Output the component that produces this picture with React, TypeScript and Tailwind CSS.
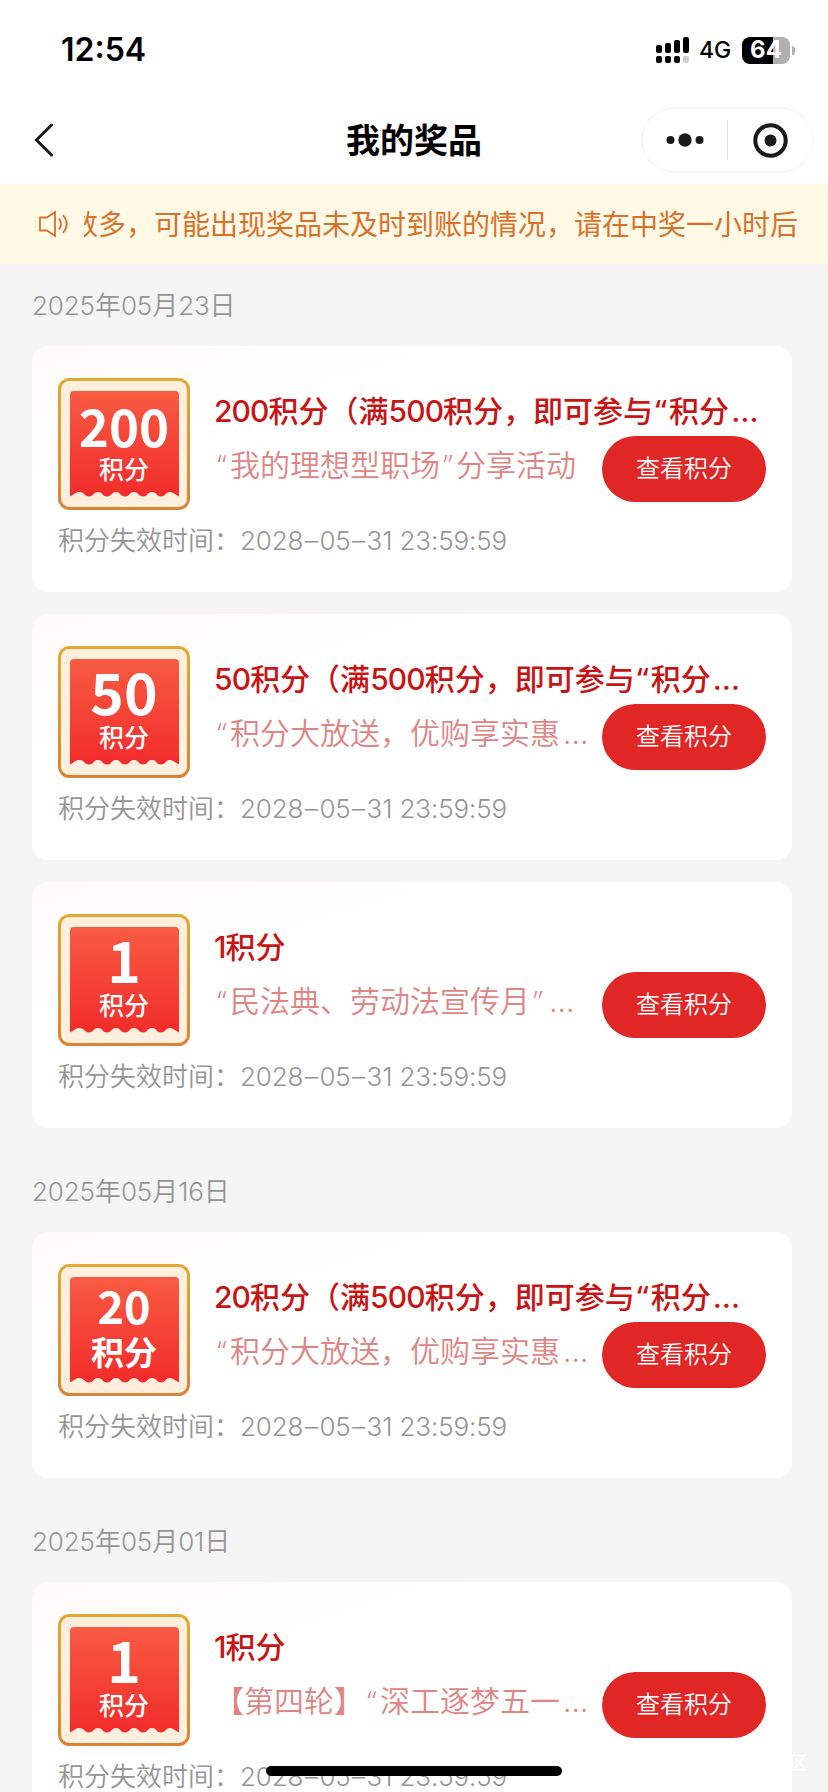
interface Prize {
  points: string;
  title: string;
  activity: string;
  large?: boolean;
}

interface PrizeGroup {
  date: string;
  prizes: Prize[];
}

const EXPIRE_TIME = '2028–05–31 23:59:59';

const groups: PrizeGroup[] = [
  {
    date: '2025年05月23日',
    prizes: [
      { points: '200', title: '200积分（满500积分，即可参与“积分…', activity: '“我的理想型职场”分享活动' },
      { points: '50', title: '50积分（满500积分，即可参与“积分…', activity: '“积分大放送，优购享实惠…' },
      { points: '1', title: '1积分', activity: '“民法典、劳动法宣传月”…' },
    ],
  },
  {
    date: '2025年05月16日',
    prizes: [
      { points: '20', title: '20积分（满500积分，即可参与“积分…', activity: '“积分大放送，优购享实惠…', large: true },
    ],
  },
  {
    date: '2025年05月01日',
    prizes: [{ points: '1', title: '1积分', activity: '【第四轮】“深工逐梦五一…' }],
  },
];

function runClass(part: string, tight?: boolean) {
  if (part === '“' || part === '”') return "inline-block w-[16px] text-center font-['Noto_Sans']";
  if (part === '…') return "inline-block w-[32px] text-center font-['Inter'] tracking-[0.02em]";
  if (part === '–') return "inline-block w-[16px] text-center font-['Inter']";
  return tight ? "font-['Inter'] tracking-[-0.03em]" : "font-['Inter'] tracking-[-0.005em]";
}

// Latin runs use their own face and tracking so the digits stay compact next to the hanzi
function MixedText({ text, tight }: { text: string; tight?: boolean }) {
  return (
    <>
      {text.split(/([0-9: ]+|[“”…–])/).map((part, i) =>
        i % 2 === 1 ? (
          <span key={i} className={runClass(part, tight)}>
            {part}
          </span>
        ) : (
          part
        )
      )}
    </>
  );
}

function StatusBar() {
  return (
    <div className="flex h-[96px] items-center justify-between pl-[61px] pr-[33px] pt-1">
      <span className="font-['Inter'] text-[32px] font-semibold leading-none">12:54</span>
      <div className="flex items-center">
        <svg width="34" height="27" viewBox="0 0 34 27">
          <rect x="0" y="8" width="6" height="8" rx="2" />
          <rect x="9" y="6" width="6" height="10" rx="2" />
          <rect x="18" y="3" width="6" height="13" rx="2" />
          <rect x="27" y="0" width="6" height="16" rx="2" />
          <rect x="0" y="19" width="6" height="7" rx="2" />
          <rect x="9" y="19" width="6" height="7" rx="2" />
          <rect x="18" y="19" width="6" height="7" rx="2" />
          <rect x="27" y="19" width="6" height="7" rx="2" fill="#d0d0d0" />
        </svg>
        <span className="ml-[9px] w-[34px] font-['Inter'] text-[23px] font-medium leading-none">4G</span>
        <div className="ml-[9px] flex h-[27px] w-[48px] items-center justify-center rounded-[8px] bg-linear-to-r from-black from-65% to-[#b0b0b0] to-65% font-['Inter'] text-[24px] font-bold leading-none text-white">
          64
        </div>
        <div className="ml-[2px] h-[9px] w-[3px] rounded-r-full bg-[#b0b0b0]" />
      </div>
    </div>
  );
}

function NavBar() {
  return (
    <div className="grid h-[88px] grid-cols-[1fr_auto_1fr] items-center pl-[34px] pr-[14px]">
      <svg width="20" height="34" viewBox="0 0 20 34" fill="none" stroke="#1a1a1a" strokeWidth="3" strokeLinecap="round">
        <path d="M17.500 2 L2.500 17 L17.500 32" />
      </svg>
      <h1 className="mb-[3px] ml-[-20px] text-[34px] font-bold leading-none">我的奖品</h1>
      <div className="flex h-[66px] w-[173px] items-center justify-self-end rounded-full border-2 border-[#f9f9f9]">
        <svg className="ml-[23px]" width="38" height="14" viewBox="0 0 38 14" fill="#1a1a1a">
          <circle cx="4.500" cy="7" r="4" />
          <circle cx="19" cy="7" r="6.700" />
          <circle cx="33.500" cy="7" r="4" />
        </svg>
        <div className="ml-[23px] h-[40px] w-px bg-[#e2e2e2]" />
        <svg className="ml-[25px]" width="35" height="35" viewBox="0 0 35 35" fill="none">
          <circle cx="17.500" cy="17.500" r="15.200" stroke="#1a1a1a" strokeWidth="4" />
          <circle cx="17.500" cy="17.500" r="6" fill="#1a1a1a" />
        </svg>
      </div>
    </div>
  );
}

function NoticeBar() {
  return (
    <div className="flex h-[80px] items-center bg-[#fff9e6] pl-[39px] pr-[30px] text-[#d9712a]">
      <svg width="30" height="28" viewBox="0 0 30 28" fill="none" stroke="currentColor" strokeWidth="1.800">
        <path d="M1 7.500 H8 L16 2 V26 L8 20.500 H1 Z" />
        <path d="M20 8.500 Q24 14 20 19.500" />
        <path d="M24 5 Q31.500 14 24 23" />
      </svg>
      <div className="mb-[2px] ml-[15px] flex flex-1 justify-end overflow-hidden">
        <span className="shrink-0 whitespace-nowrap text-[28px] leading-[40px]">
          数多，可能出现奖品未及时到账的情况，请在中奖一小时后
        </span>
      </div>
    </div>
  );
}

function pointsClass(points: string, large?: boolean) {
  if (large) return 'text-[45px] font-bold';
  return points.length > 2 ? 'text-[51px] font-bold' : 'text-[57px] font-bold';
}

function PointsBadge({ points, large }: { points: string; large?: boolean }) {
  return (
    <svg className="shrink-0" width="132" height="132" viewBox="0 0 132 132">
      <defs>
        <linearGradient id="badgeBorder" x1="0" y1="0" x2="0" y2="1">
          <stop offset="0" stopColor="#e3a935" />
          <stop offset="1" stopColor="#db8437" />
        </linearGradient>
        <linearGradient id="badgeFill" x1="0" y1="0" x2="0" y2="1">
          <stop offset="0" stopColor="#f85b42" />
          <stop offset="1" stopColor="#f22c2c" />
        </linearGradient>
      </defs>
      <rect x="1.500" y="1.500" width="129" height="129" rx="10" fill="#ffefdc" stroke="url(#badgeBorder)" strokeWidth="3" />
      <path
        d="M12 17 q0 -4 4 -4 h101 q4 0 4 4 V118.500 C115 115 114 114 112 114 C107 114 108 118.500 103 118.500 S99 114 94 114 S90 118.500 85 118.500 S81 114 76 114 S72 118.500 67 118.500 S63 114 58 114 S54 118.500 49 118.500 S45 114 40 114 S36 118.500 31 118.500 S27 114 21 114 C18 114 17 116 12 118.500 Z"
        fill="url(#badgeFill)"
      />
      <text x="66" y={large ? 60 : 69} textAnchor="middle" fill="#fff" className={pointsClass(points, large)}>
        {points}
      </text>
      <text
        x="66"
        y="101"
        textAnchor="middle"
        fill="#fff"
        className={large ? 'text-[33px] font-bold' : 'text-[25px] font-medium'}
      >
        积分
      </text>
    </svg>
  );
}

function PrizeCard({ prize }: { prize: Prize }) {
  return (
    <div className="h-[246px] rounded-[16px] bg-white bg-linear-to-br from-[#fffafa] to-white to-30% px-[26px] pt-[32px]">
      <div className="flex h-[132px]">
        <PointsBadge points={prize.points} large={prize.large} />
        <div className="ml-[24px] min-w-0 flex-1 pt-[10px]">
          <div className="h-[48px] whitespace-nowrap text-[30px] font-medium leading-[42px] text-[#c81414]">
            <MixedText text={prize.title} tight />
          </div>
          <div className="flex">
            <div className="mt-[6px] min-w-0 flex-1 whitespace-nowrap text-[30px] font-[350] leading-[42px] text-[#e08484]">
              <MixedText text={prize.activity} />
            </div>
            <button className="h-[66px] w-[164px] shrink-0 rounded-full bg-[#e12626] pb-[5px] text-[24px] font-[350] leading-none text-white">
              查看积分
            </button>
          </div>
        </div>
      </div>
      <div className="mt-[9px] whitespace-nowrap text-[26px] font-[350] leading-[40px] text-[#959595]">
        <MixedText text={`积分失效时间：${EXPIRE_TIME}`} />
      </div>
    </div>
  );
}

export default function App() {
  return (
    <div className="relative h-[1792px] w-[828px] overflow-hidden bg-[#f5f5f5] font-['Noto_Sans_CJK_SC',sans-serif] text-black">
      <header className="bg-white">
        <StatusBar />
        <NavBar />
      </header>
      <NoticeBar />

      <main className="pl-[32px] pr-[36px]">
        {groups.map((group) => (
          <section key={group.date} className="mb-[22px]">
            <div className="flex h-[82px] items-center pb-[2px] text-[26px] font-[350] text-[#959595]">
              <span>
                <MixedText text={group.date} />
              </span>
            </div>
            <div className="flex flex-col gap-[22px]">
              {group.prizes.map((prize, i) => (
                <PrizeCard key={i} prize={prize} />
              ))}
            </div>
          </section>
        ))}
      </main>

      <span className="absolute bottom-[21px] right-[21px] text-[17px] leading-[18px] text-white">区</span>

      {/* Home indicator */}
      <div className="absolute bottom-[16px] left-[266px] h-[10px] w-[296px] rounded-full bg-black" />
    </div>
  );
}
